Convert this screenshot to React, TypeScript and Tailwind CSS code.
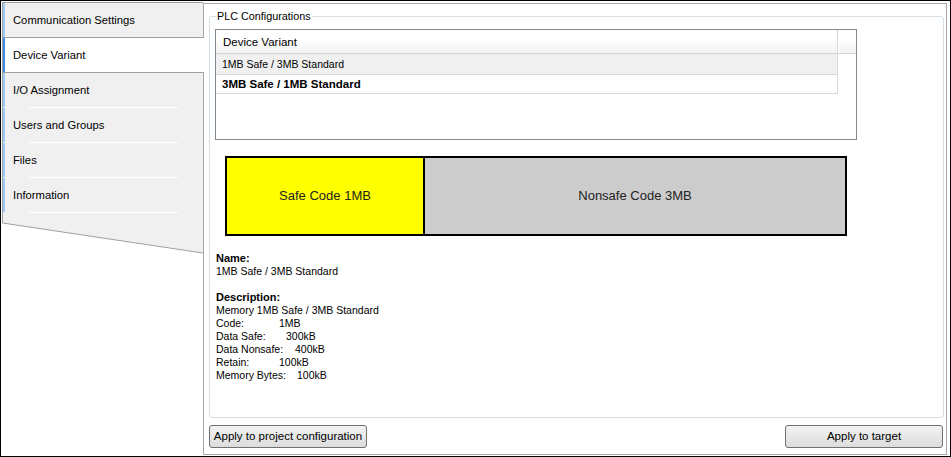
import React from 'react';

const tabBorder = 'border-[#a0a0a0]';

const SideItem: React.FC<{ label: string }> = ({ label }) => (
  <div className={`border-l ${tabBorder} bg-[#f0f0f0]`}>
    <div className="flex h-[34px]">
      <div className="w-[2px] bg-[#9fcbf7]" />
      <span className="pl-[8px] self-center text-[11.25px]">{label}</span>
    </div>
    <div className="h-[1px] flex">
      <div className="ml-[25px] w-[150px] bg-white" />
    </div>
  </div>
);

const DescLine: React.FC<{ label: string; value: string; w: string }> = ({ label, value, w }) => (
  <div className="flex h-[13px] items-center">
    <span className={w}>{label}</span>
    <span>{value}</span>
  </div>
);

export default function App() {
  return (
    <div
      className="w-[951px] h-[457px] border border-black bg-white flex text-black overflow-hidden"
      style={{ fontFamily: '"Liberation Sans", Arial, sans-serif' }}
    >
      {/* sidebar */}
      <div className="relative z-10 ml-[1px] w-[201px] shrink-0 pt-[1px]">
        <div className={`flex h-[36px] border-t border-b border-l ${tabBorder} bg-[#f0f0f0]`}>
          <div className="w-[2px] bg-[#9fcbf7]" />
          <span className="pl-[8px] self-center text-[11.25px]">Communication Settings</span>
        </div>
        <div className={`flex h-[35px] -mr-[1px] border-b border-l ${tabBorder} bg-white`}>
          <div className="w-[2px] bg-[#3c8de8]" />
          <span className="pl-[8px] self-center text-[11.25px]">Device Variant</span>
        </div>
        <SideItem label="I/O Assignment" />
        <SideItem label="Users and Groups" />
        <SideItem label="Files" />
        <SideItem label="Information" />
        <svg width="201" height="41" className="block">
          <polygon points="0,0 201,0 201,40 0,10" fill="#f0f0f0" />
          <line x1="0.5" y1="0" x2="0.5" y2="10" stroke="#a0a0a0" strokeWidth="1" />
          <line x1="0.5" y1="10" x2="201" y2="40" stroke="#a0a0a0" strokeWidth="1" />
        </svg>
      </div>

      {/* main panel */}
      <div className="flex-1 mt-[2px] mb-[1px] mr-[3px] border border-[#a7a7a7] flex flex-col pl-[5px] pr-[2px] pt-[12px]">
        <div className="relative h-[402px] border border-[#d5dfe5] rounded-[3px] pl-[5px] pt-[12px]">
          <span className="absolute left-[6px] -top-[8px] bg-white px-[1px] text-[10.8px] leading-[14px]">
            PLC Configurations
          </span>

          {/* list */}
          <div className="w-[642px] h-[111px] border border-[#828790] bg-white">
            <div className="flex h-[24px] border-b border-[#d5d5d5] bg-gradient-to-b from-white from-40% to-[#f1f2f4]">
              <div className="w-[622px] border-r border-[#d5d5d5] pl-[7px] pt-[2px] flex items-center text-[11.5px]">
                Device Variant
              </div>
              <div className="flex-1 border-l border-white" />
            </div>
            <div className="w-[622px] h-[21px] border-b border-r border-[#dadada] bg-[#f0f0f0] pl-[6px] pt-[2px] flex items-center text-[10.5px]">
              1MB Safe / 3MB Standard
            </div>
            <div className="w-[622px] h-[19px] border-b border-r border-[#dadada] bg-white pl-[6px] pt-[2px] flex items-center text-[11.5px] font-bold">
              3MB Safe / 1MB Standard
            </div>
          </div>

          {/* memory bar */}
          <div className="ml-[10px] mt-[16px] w-[622px] h-[80px] border-2 border-black flex text-[13px] text-[#222]">
            <div className="w-[198px] border-r-2 border-black bg-[#ffff00] flex items-center justify-center">
              Safe Code 1MB
            </div>
            <div className="flex-1 bg-[#cccccc] flex items-center justify-center">Nonsafe Code 3MB</div>
          </div>

          {/* info */}
          <div className="ml-[1px] mt-[16px] text-[10.5px] leading-[13px]">
            <div className="font-bold text-[11px]">Name:</div>
            <div>1MB Safe / 3MB Standard</div>
            <div className="h-[13px]" />
            <div className="font-bold text-[11px]">Description:</div>
            <div>Memory 1MB Safe / 3MB Standard</div>
            <DescLine label="Code:" value="1MB" w="w-[63px]" />
            <DescLine label="Data Safe:" value="300kB" w="w-[70px]" />
            <DescLine label="Data Nonsafe:" value="400kB" w="w-[79px]" />
            <DescLine label="Retain:" value="100kB" w="w-[63px]" />
            <DescLine label="Memory Bytes:" value="100kB" w="w-[81px]" />
          </div>
        </div>

        <div className="mt-[7px] flex justify-between pr-[1px]">
          <button className="w-[158px] h-[23px] border border-[#707070] rounded-[3px] bg-gradient-to-b from-[#f3f3f3] to-[#dcdcdc] text-[11.5px] text-black">
            Apply to project configuration
          </button>
          <button className="w-[158px] h-[23px] border border-[#707070] rounded-[3px] bg-gradient-to-b from-[#f3f3f3] to-[#dcdcdc] text-[11.5px] text-black">
            Apply to target
          </button>
        </div>
      </div>
    </div>
  );
}
